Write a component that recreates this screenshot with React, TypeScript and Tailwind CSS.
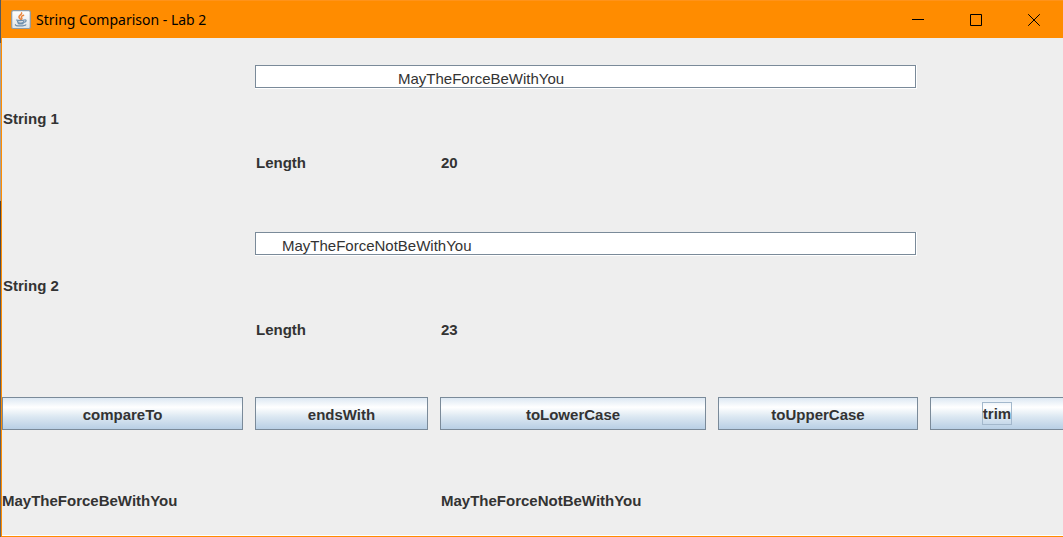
import type { ReactNode } from "react";

const columns =
  "grid grid-cols-[241fr_173fr_266fr_200fr_133fr] gap-x-3";

function JavaIcon() {
  return (
    <svg width="20" height="20" viewBox="0 0 20 20" aria-hidden="true">
      <defs>
        <linearGradient id="tile" x1="0" y1="0" x2="0" y2="1">
          <stop offset="0" stopColor="#ffffff" />
          <stop offset="1" stopColor="#dfe3e6" />
        </linearGradient>
      </defs>
      <rect x="0.7" y="0.7" width="18.6" height="17.8" rx="1.5" fill="url(#tile)" stroke="#8d9aa5" strokeWidth="1.2" />
      <path d="M10.6 2.8c1 1.5-3.4 2.6-2.6 4.4.3.9 1.2 1.4 1.5 2.3M12.6 5.2c-2 .8-2.8 1.5-1.9 2.6.5.7.2 1.3-.5 1.8" fill="none" stroke="#e8853c" strokeWidth="1.5" strokeLinecap="round" />
      <path d="M5.5 10c1.500.7 6 .7 7.800 0M6.500 11.300c.3 2.300 5.600 2.300 6.200 0M13.300 10c2.600-.6 2.300 2-.4 2.300M7.200 13.600c1.500.5 3.500.5 5 0M4.500 14.600c-1.500 1.700 9.500 1.800 10.300.2" fill="none" stroke="#6f8fad" strokeWidth="1.200" strokeLinecap="round" />
    </svg>
  );
}

function CaptionButton({ label, children }: { label: string; children: ReactNode }) {
  return (
    <button type="button" aria-label={label} className="flex w-[58px] items-center justify-center">
      <svg width="12" height="12" viewBox="0 0 12 12" fill="none" stroke="#000000" aria-hidden="true">
        {children}
      </svg>
    </button>
  );
}

function StringSection({ id, label, value, length, indent }: {
  id: string;
  label: string;
  value: string;
  length: number;
  indent: string;
}) {
  return (
    <section className={`${columns} leading-5 font-bold`}>
      <div className="col-span-3 col-start-2 mr-px border-r border-b border-white">
        <input
          id={id}
          type="text"
          defaultValue={value}
          className={`block h-[23px] w-full border border-[#7a8a99] bg-white pt-[3px] font-normal outline-none ${indent}`}
        />
      </div>
      <label htmlFor={id} className="col-start-1 row-start-2 mt-5 pl-px">
        {label}
      </label>
      <span className="col-start-2 row-start-3 mt-6 pl-px">Length</span>
      <span className="col-start-3 row-start-3 mt-6 pl-px">{length}</span>
    </section>
  );
}

function ActionButton({ children, focused = false, className = "" }: { children: string; focused?: boolean; className?: string }) {
  return (
    <button
      type="button"
      className={`flex h-[33px] items-center justify-center border border-[#7a8a99] bg-[linear-gradient(to_bottom,#dde8f3_0%,#ffffff_30%,#dce8f2_60%,#b8cfe5_100%)] font-bold outline-none ${className}`}
    >
      <span className={focused ? "border border-[#a3b8cc] pt-px leading-5" : "pt-0.5 leading-5"}>{children}</span>
    </button>
  );
}

export default function App() {
  return (
    <div className="flex min-h-screen bg-[#eeeeee] font-['Liberation_Sans',Arial,sans-serif] text-[15px] text-[#333333]">
      <div className="w-px shrink-0 bg-[linear-gradient(to_bottom,#555a60_0px,#555a60_43px,#a0a0a0_43px,#a0a0a0_201px,#444444_201px,#55585c_306px,#666666_100%)]" />
      <div className="flex min-w-0 grow flex-col border-b border-l border-[#ff8c00]">
        <header className="flex h-[38px] shrink-0 items-stretch justify-between border-t border-[#ff931a] bg-[#ff8c00] text-black">
          <div className="flex items-center gap-1 pl-[9px]">
            <JavaIcon />
            <h1 className="pl-px font-['Noto_Sans',sans-serif] text-[14px] leading-5">String Comparison - Lab 2</h1>
          </div>
          <div className="flex">
            <CaptionButton label="Minimize">
              <path d="M0 5.500h12" />
            </CaptionButton>
            <CaptionButton label="Maximize">
              <path d="M.5.5h11v11H.5z" />
            </CaptionButton>
            <CaptionButton label="Close">
              <path d="M.2.2l11.600 11.600M11.800.2.2 11.800" />
            </CaptionButton>
          </div>
        </header>
        <main className="flex grow flex-col border-b border-white pt-[27px]">
          <StringSection id="string-1" label="String 1" value="MayTheForceBeWithYou" length={20} indent="pl-[142px]" />
          <div className="h-[59px]" />
          <StringSection id="string-2" label="String 2" value="MayTheForceNotBeWithYou" length={23} indent="pl-[26px]" />
          <div className={`${columns} mt-[57px]`}>
            <ActionButton>compareTo</ActionButton>
            <ActionButton>endsWith</ActionButton>
            <ActionButton>toLowerCase</ActionButton>
            <ActionButton>toUpperCase</ActionButton>
            <ActionButton focused className="border-r-0">trim</ActionButton>
          </div>
          <div className={`${columns} mt-[61px] leading-5 font-bold`}>
            <output>MayTheForceBeWithYou</output>
            <output className="col-start-3 pl-px">MayTheForceNotBeWithYou</output>
          </div>
        </main>
      </div>
    </div>
  );
}
